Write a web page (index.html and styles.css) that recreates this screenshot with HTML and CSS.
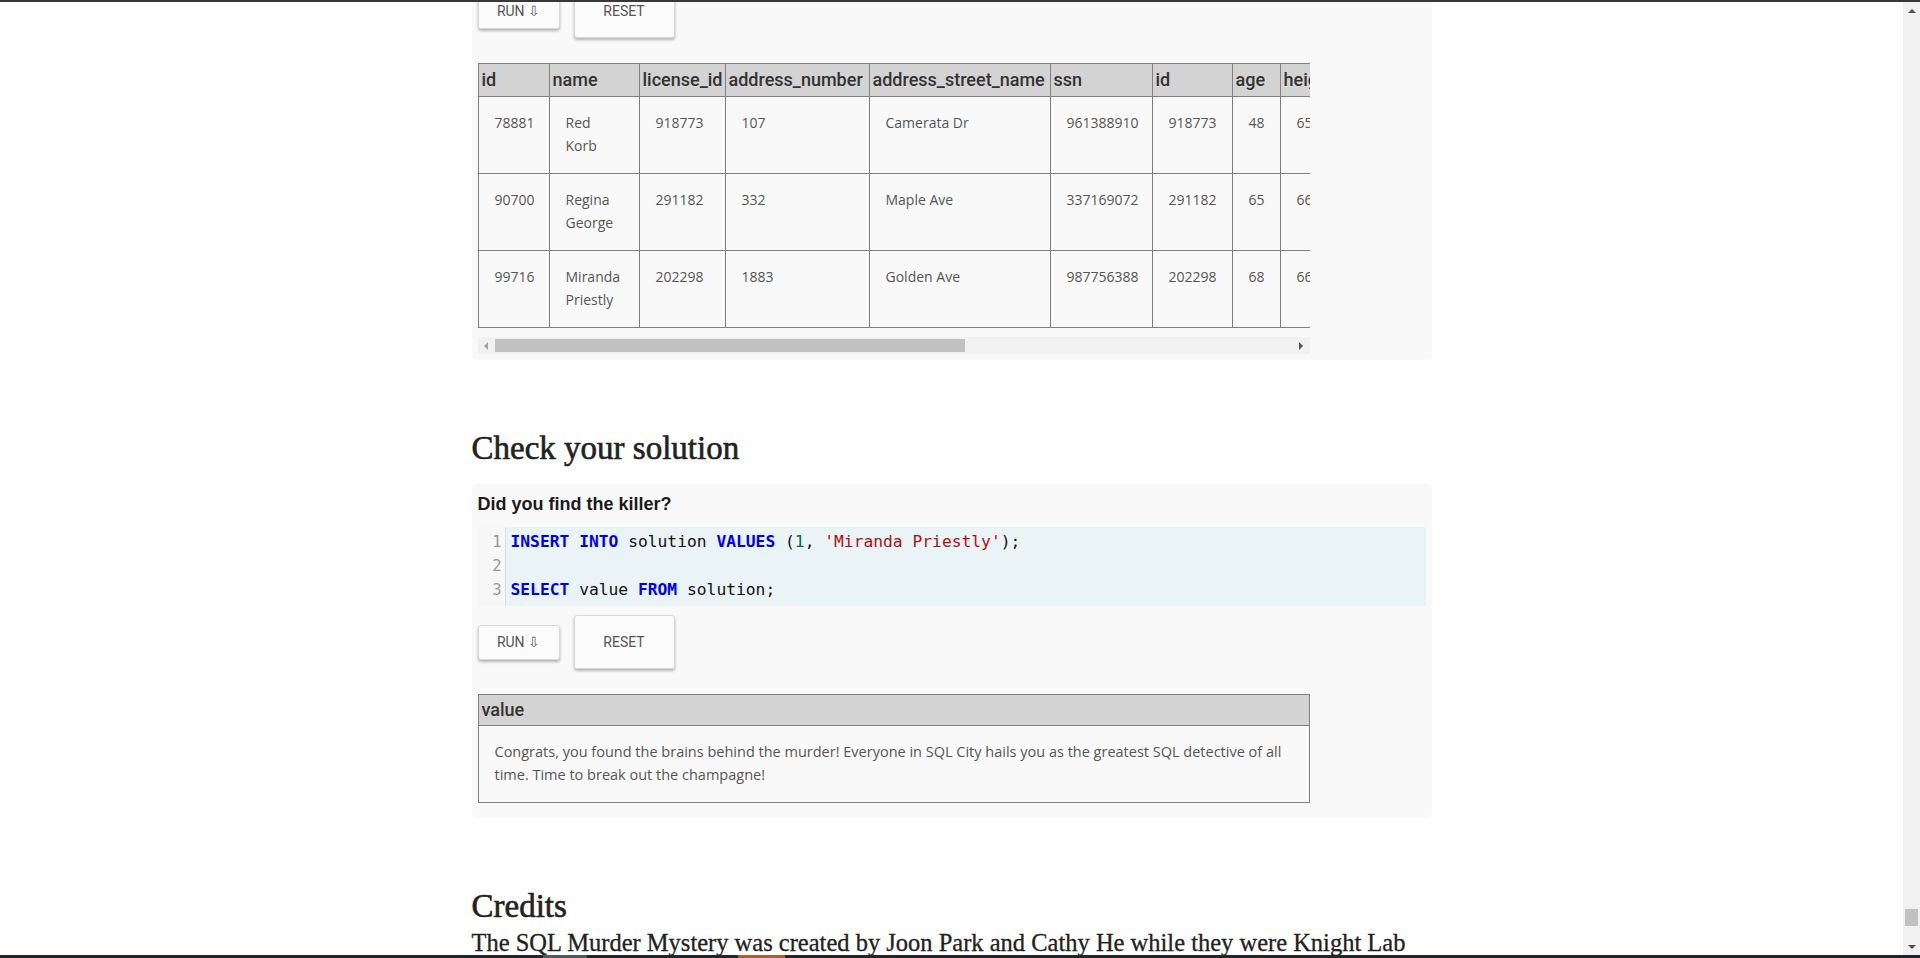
FILE: index.html
```html
<!DOCTYPE html>
<html lang="en">
<head>
<meta charset="utf-8">
<title>SQL Murder Mystery</title>
<link rel="stylesheet" href="styles.css">
</head>
<body>
<div class="screen">
  <div class="topbar"></div>
  <div class="main">
    <div class="page">
      <main class="content">
        <section class="panel panel-first">
          <div class="editor">
            <div class="gutter"><span>1</span><span>2</span><span>3</span></div>
            <pre class="code"><span class="kw">SELECT</span> *
<span class="kw">FROM</span> person
<span class="kw">JOIN</span> drivers_license <span class="kw">ON</span> person.license_id = drivers_license.id;</pre>
          </div>
          <div class="actions">
            <button class="btn btn-run">RUN ⇩</button>
            <button class="btn btn-reset">RESET</button>
          </div>
          <div class="result">
            <div class="result-view">
              <table class="grid grid-wide">
                <colgroup>
                  <col style="width:71px"><col style="width:90px"><col style="width:86px"><col style="width:144px"><col style="width:181px"><col style="width:102px"><col style="width:80px"><col style="width:48px"><col style="width:66px"><col style="width:95px"><col style="width:98px"><col style="width:72px"><col style="width:125px"><col style="width:95px"><col style="width:95px">
                </colgroup>
                <thead>
                  <tr><th>id</th><th>name</th><th>license_id</th><th>address_number</th><th>address_street_name</th><th>ssn</th><th>id</th><th>age</th><th>height</th><th>eye_color</th><th>hair_color</th><th>gender</th><th>plate_number</th><th>car_make</th><th>car_model</th></tr>
                </thead>
                <tbody>
                  <tr><td>78881</td><td>Red Korb</td><td>918773</td><td>107</td><td>Camerata Dr</td><td>961388910</td><td>918773</td><td>48</td><td>65</td><td>black</td><td>red</td><td>female</td><td>917UU3</td><td>Tesla</td><td>Model S</td></tr>
                  <tr><td>90700</td><td>Regina George</td><td>291182</td><td>332</td><td>Maple Ave</td><td>337169072</td><td>291182</td><td>65</td><td>66</td><td>blue</td><td>red</td><td>female</td><td>08CM64</td><td>Tesla</td><td>Model S</td></tr>
                  <tr><td>99716</td><td>Miranda Priestly</td><td>202298</td><td>1883</td><td>Golden Ave</td><td>987756388</td><td>202298</td><td>68</td><td>66</td><td>green</td><td>red</td><td>female</td><td>500123</td><td>Tesla</td><td>Model S</td></tr>
                </tbody>
              </table>
            </div>
            <div class="hscroll">
              <span class="hs-btn"><span class="tri tri-left"></span></span>
              <div class="hs-track"><div class="hs-thumb"></div></div>
              <span class="hs-btn"><span class="tri tri-right"></span></span>
            </div>
          </div>
        </section>

        <h2 class="heading">Check your solution</h2>
        <section class="panel">
          <div class="prompt">Did you find the killer?</div>
          <div class="editor">
            <div class="gutter"><span>1</span><span>2</span><span>3</span></div>
            <pre class="code"><span class="kw">INSERT</span> <span class="kw">INTO</span> solution <span class="kw">VALUES</span> (<span class="num">1</span>, <span class="str">'Miranda Priestly'</span>);

<span class="kw">SELECT</span> value <span class="kw">FROM</span> solution;</pre>
          </div>
          <div class="actions">
            <button class="btn btn-run">RUN ⇩</button>
            <button class="btn btn-reset">RESET</button>
          </div>
          <div class="result">
            <div class="result-view">
              <table class="grid grid-value">
                <thead><tr><th>value</th></tr></thead>
                <tbody><tr><td>Congrats, you found the brains behind the murder! Everyone in SQL City hails you as the greatest SQL detective of all time. Time to break out the champagne!</td></tr></tbody>
              </table>
            </div>
          </div>
        </section>

        <h2 class="heading">Credits</h2>
        <p class="credits">The SQL Murder Mystery was created by Joon Park and Cathy He while they were Knight Lab fellows. See the GitHub repository for more information.</p>
      </main>
    </div>
    <div class="vscroll">
      <span class="vs-btn"><span class="tri tri-up"></span></span>
      <div class="vs-track"><div class="vs-thumb"></div></div>
      <span class="vs-btn"><span class="tri tri-down"></span></span>
    </div>
  </div>
  <div class="taskbar"><span class="tb-seg tb-grey"></span><span class="tb-seg tb-orange"></span></div>
</div>
</body>
</html>
```
FILE: styles.css
```css
* { box-sizing: border-box; }
html, body { margin: 0; padding: 0; }
body {
  background: #fff;
  font-family: Roboto, "Liberation Sans", sans-serif;
  color: #222;
  overflow: hidden;
}
.screen { display: flex; flex-direction: column; height: 958px; width: 1920px; }
.topbar { flex: none; height: 2px; background: #383838; }
.taskbar { flex: none; height: 3px; background: #1f2729; display: flex; }
.tb-seg { display: block; height: 3px; }
.tb-grey { width: 44px; margin-left: 543px; background: #505a5c; }
.tb-orange { width: 47px; margin-left: 151px; background: #a9622b; }

.main { flex: 1; display: flex; min-height: 0; }
.page { flex: 1; min-width: 0; overflow: hidden; }
.content { width: 960px; margin: -112px auto 0; }

/* page scrollbar */
.vscroll { flex: none; width: 17px; background: #f1f1f1; display: flex; flex-direction: column; }
.vs-btn { flex: none; height: 17px; display: flex; align-items: center; justify-content: center; }
.vs-track { flex: 1; display: flex; flex-direction: column; justify-content: flex-end; padding: 0 2px 12px; }
.vs-thumb { height: 17px; background: #c1c1c1; }

.tri { display: block; width: 0; height: 0; }
.tri-up { border-left: 4px solid transparent; border-right: 4px solid transparent; border-bottom: 4px solid #505050; }
.tri-down { border-left: 4px solid transparent; border-right: 4px solid transparent; border-top: 4px solid #505050; }
.tri-left { border-top: 4px solid transparent; border-bottom: 4px solid transparent; border-right: 4px solid #a3a3a3; }
.tri-right { border-top: 4px solid transparent; border-bottom: 4px solid transparent; border-left: 4px solid #505050; }

/* panels */
.panel { background: #f9f9f9; border-radius: 5px; padding: 6px; margin-top: 16px; }
.panel-first { margin-top: 0; border-radius: 0 0 5px 5px; }
.prompt {
  font-family: "Liberation Sans", Arial, sans-serif;
  font-weight: bold;
  font-size: 18px;
  line-height: 28px;
  color: #1b1b1b;
  margin-bottom: 9px;
}
.editor { display: flex; background: #eaf3f6; }
.gutter {
  flex: none;
  width: 28px;
  background: #f7f7f7;
  border-right: 1px solid #ddd;
  padding: 3px 3px 4px 0;
  display: flex;
  flex-direction: column;
  align-items: flex-end;
  font-family: "DejaVu Sans Mono", monospace;
  font-size: 15.5px;
  line-height: 24px;
  color: #999;
}
.code {
  flex: 1;
  margin: 0;
  padding: 3px 5px 4px;
  font-family: "DejaVu Sans Mono", monospace;
  font-size: 16.3px;
  line-height: 24px;
  color: #111;
  white-space: pre;
}
.kw { color: #0000f0; font-weight: bold; }
.num { color: #116644; }
.str { color: #aa1111; }

.actions { display: flex; align-items: center; gap: 14px; margin-top: 9px; }
.btn {
  font-family: Roboto, "Liberation Sans", sans-serif;
  font-size: 14px;
  color: #555;
  background: #fbfbfb;
  border: 1px solid #d8d8d8;
  border-radius: 3px;
  box-shadow: 0 2px 3px rgba(0, 0, 0, 0.28);
  padding: 0;
  text-align: center;
}
.btn-run { width: 82px; height: 35px; }
.btn-reset { width: 101px; height: 54px; }

.result { width: 832px; margin-top: 25px; }
.result-view { overflow: hidden; padding-bottom: 9px; }
.grid { border-collapse: collapse; table-layout: fixed; }
.grid-wide { width: 1448px; }
.grid-value { width: 100%; }
.grid th {
  background: #d3d3d3;
  border: 1px solid #808080;
  text-align: left;
  font-weight: 500;
  font-size: 18px;
  line-height: 24px;
  padding: 4px 3px;
  color: #333;
  white-space: nowrap;
  overflow: hidden;
}
.grid-value th { padding: 3px 3px; }
.grid td {
  border: 1px solid #808080;
  padding: 15px 16px 16px;
  font-family: "Open Sans", Roboto, sans-serif;
  font-size: 14px;
  line-height: 22.5px;
  color: #555;
  vertical-align: top;
  overflow: hidden;
}
.grid-value td { font-size: 14.5px; }

.hscroll { display: flex; height: 17px; background: #f1f1f1; }
.hs-btn { flex: none; width: 17px; display: flex; align-items: center; justify-content: center; }
.hs-track { flex: 1; padding: 2px 0; }
.hs-thumb { width: 470px; height: 100%; background: #c1c1c1; }

.heading {
  font-family: "Liberation Serif", "Times New Roman", serif;
  font-weight: normal;
  font-size: 33px;
  line-height: 40px;
  color: #222;
  -webkit-text-stroke: 0.6px #222;
  margin: 68px 0 0;
}
.credits {
  font-family: "Liberation Serif", "Times New Roman", serif;
  font-size: 24.5px;
  line-height: 34px;
  color: #222;
  -webkit-text-stroke: 0.3px #222;
  margin: 0;
}
```
